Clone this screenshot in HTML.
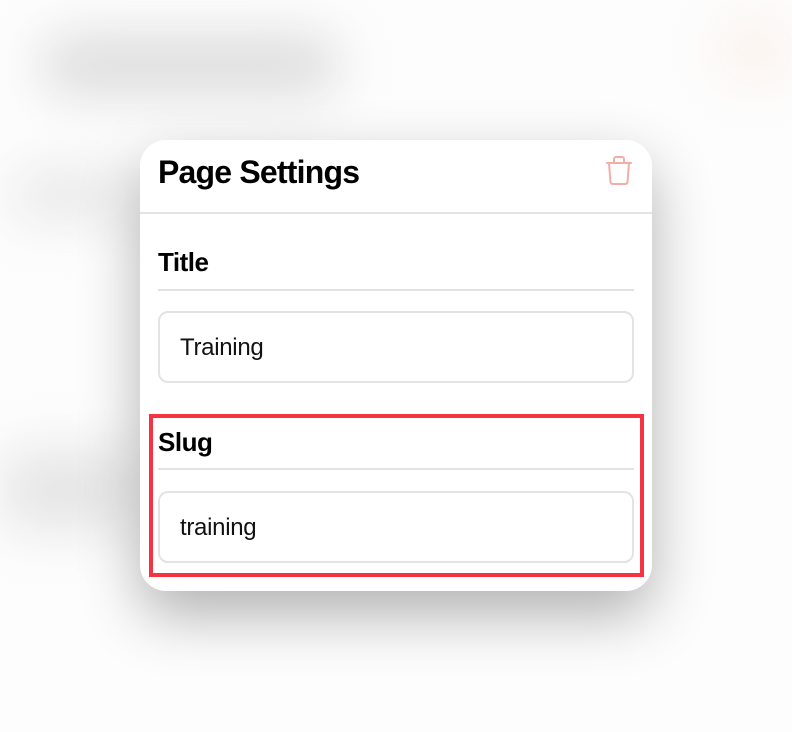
<!DOCTYPE html>
<html><head><style>
html,body{margin:0;padding:0;width:792px;height:732px;overflow:hidden;background:#fdfdfd;font-family:"Liberation Sans",sans-serif;}
.blob{position:absolute;background:#dcdcdc;filter:blur(26px);border-radius:30px;}
.card{position:absolute;left:140px;top:140px;width:512px;height:451px;background:#fff;border-radius:26px;box-shadow:0 24px 60px rgba(0,0,0,0.30);overflow:hidden;}
.h{position:absolute;left:18px;top:14px;font-size:32px;font-weight:bold;letter-spacing:-0.8px;color:#000;}
.hr{position:absolute;left:0;top:72px;width:512px;height:2px;background:#e4e4e4;}
.lab{position:absolute;left:18px;font-size:26px;font-weight:bold;letter-spacing:-0.5px;color:#000;}
.line{position:absolute;left:18px;width:476px;height:2px;background:#e2e2e2;}
.inp{position:absolute;left:18px;width:452px;height:68px;border:2px solid #e3e3e3;border-radius:10px;font-size:24px;line-height:70px;padding-left:20px;color:#111;letter-spacing:-0.3px;}
.red{position:absolute;left:149px;top:414px;width:487px;height:155px;border:4px solid #f43343;}
</style></head><body>
<div class="blob" style="left:40px;top:35px;width:300px;height:60px;"></div>
<div class="blob" style="left:10px;top:170px;width:120px;height:50px;background:#e8e8e8"></div>
<div class="blob" style="left:0px;top:450px;width:140px;height:80px;background:#e5e5e5"></div>
<div class="blob" style="left:720px;top:20px;width:70px;height:60px;background:#fcf0ea"></div>
<div class="card">
  <div class="h">Page Settings</div>
  <svg style="position:absolute;left:464px;top:15px" width="30" height="32" viewBox="0 0 30 32" fill="none" stroke="#f3aca6" stroke-width="2" stroke-linejoin="round" stroke-linecap="round"><path d="M10 7V4a2 2 0 0 1 2-2h6a2 2 0 0 1 2 2v3"/><path d="M3 8H27"/><path d="M5 8L6.5 27a2 2 0 0 0 2 2h13a2 2 0 0 0 2-2L25 8"/></svg>
  <div class="hr"></div>
  <div class="lab" style="top:107px">Title</div>
  <div class="line" style="top:149px"></div>
  <div class="inp" style="top:171px">Training</div>
  <div class="lab" style="top:287px">Slug</div>
  <div class="line" style="top:328px"></div>
  <div class="inp" style="top:351px">training</div>
</div>
<div class="red"></div>
</body></html>
